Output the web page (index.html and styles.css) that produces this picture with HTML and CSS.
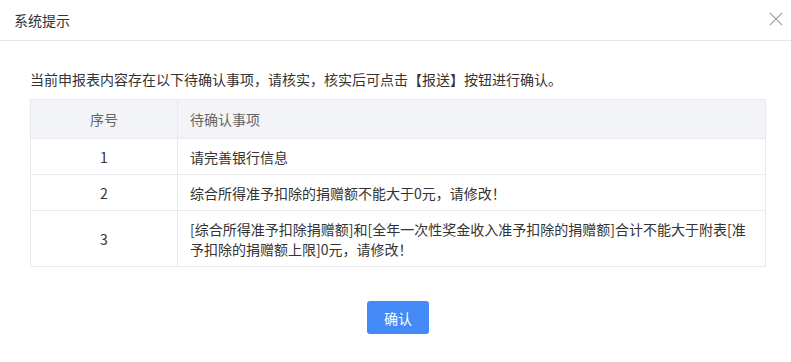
FILE: index.html
```html
<!DOCTYPE html>
<html lang="zh-CN">
<head>
    <meta charset="UTF-8">
    <meta name="viewport" content="width=device-width, initial-scale=1.0">
    <title>系统提示</title>
    <link rel="stylesheet" href="styles.css">
</head>
<body>

<div class="dialog">
    <div class="dialog-header">
        <span class="dialog-title">系统提示</span>
        <svg class="close" width="14" height="14" viewBox="0 0 14 14">
            <path d="M1 1L13 13M13 1L1 13" stroke="#a6a6a6" stroke-width="1.2" fill="none"/>
        </svg>
    </div>

    <div class="dialog-body">
        <p class="notice">当前申报表内容存在以下待确认事项，请核实，核实后可点击【报送】按钮进行确认。</p>

        <table class="items">
            <thead>
                <tr>
                    <th class="col-no">序号</th>
                    <th>待确认事项</th>
                </tr>
            </thead>
            <tbody>
                <tr>
                    <td class="col-no">1</td>
                    <td>请完善银行信息</td>
                </tr>
                <tr>
                    <td class="col-no">2</td>
                    <td>综合所得准予扣除的捐赠额不能大于0元，请修改！</td>
                </tr>
                <tr>
                    <td class="col-no">3</td>
                    <td>[综合所得准予扣除捐赠额]和[全年一次性奖金收入准予扣除的捐赠额]合计不能大于附表[准予扣除的捐赠额上限]0元，请修改！</td>
                </tr>
            </tbody>
        </table>

        <div class="actions">
            <button class="btn-primary">确认</button>
        </div>
    </div>
</div>

</body>
</html>
```

FILE: styles.css
```css
body {
    margin: 0;
    font-family: "Noto Sans CJK SC", "Liberation Sans", sans-serif;
    font-size: 14px;
    color: #333;
    background: #fff;
}
.dialog-header {
    display: flex;
    justify-content: space-between;
    align-items: center;
    height: 40px;
    padding: 0 8px 0 14px;
    border-bottom: 1px solid #e6e6e6;
}
.dialog-title {
    font-size: 14px;
    line-height: 20px;
    color: #333;
}
.close {
    display: block;
    margin-top: -3px;
}
.dialog-body {
    padding: 28px 25px 0 30px;
}
.notice {
    margin: 0 0 10px;
    line-height: 20px;
}
.items {
    width: 100%;
    border-collapse: collapse;
    table-layout: fixed;
}
.items th,
.items td {
    border: 1px solid #e9e9ec;
    line-height: 20px;
    text-align: left;
    padding: 8px 12px 7px;
    font-weight: normal;
}
.items th {
    background: #f3f4f8;
    color: #666;
    padding: 9px 12px;
}
.items .row-tall td {
    padding-bottom: 8px;
}
.items .col-no {
    width: 122px;
    text-align: center;
}
.actions {
    display: flex;
    justify-content: center;
    margin-top: 34px;
}
.btn-primary {
    width: 62px;
    height: 33px;
    border: none;
    border-radius: 3px;
    background: #448af6;
    color: #fff;
    font-family: inherit;
    font-size: 14px;
    padding: 0;
}
```
